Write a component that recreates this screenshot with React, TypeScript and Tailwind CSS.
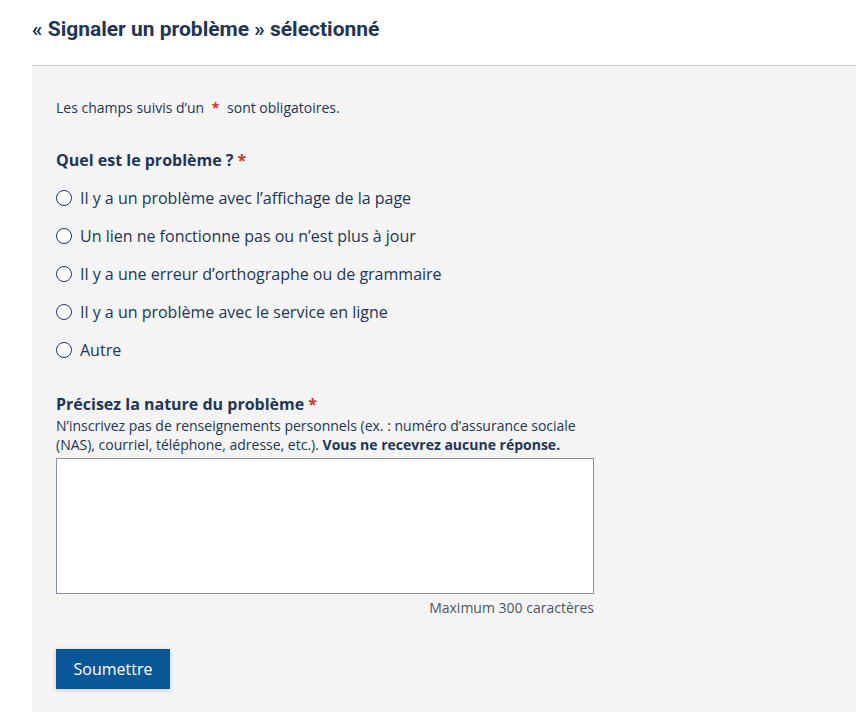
import React from "react";

const options = [
  "Il y a un problème avec l’affichage de la page",
  "Un lien ne fonctionne pas ou n’est plus à jour",
  "Il y a une erreur d’orthographe ou de grammaire",
  "Il y a un problème avec le service en ligne",
  "Autre",
];

export default function App() {
  return (
    <div className="w-[856px] h-[712px] overflow-hidden bg-white text-[#223654]" style={{ fontFamily: '"Open Sans", sans-serif' }}>
      <h2 className="pl-[32px] pt-[15px] h-[65px] text-[21px] leading-[28px] font-bold" style={{ fontFamily: "Roboto, sans-serif" }}>
        « Signaler un problème » sélectionné
      </h2>
      <div className="ml-[32px] border-t border-[#c5cad2] bg-[#f4f4f4] pl-[24px] pt-[32px] pb-[40px]">
        <p className="text-[14px] leading-[20px]">
          Les champs suivis d’un <span className="text-[#cb381f] font-bold mx-[4px]">*</span> sont obligatoires.
        </p>
        <div className="mt-[30px] text-[16px] leading-[24px] font-bold">
          Quel est le problème ? <span className="text-[#cb381f]">*</span>
        </div>
        <div className="mt-[14px] flex flex-col gap-[14px]">
          {options.map((o) => (
            <label key={o} className="flex items-center h-[24px] text-[16px] leading-[24px]">
              <span className="w-[16px] h-[16px] rounded-full border border-[#223654] bg-white mr-[8px] shrink-0" />
              {o}
            </label>
          ))}
        </div>
        <div className="mt-[30px] text-[16px] leading-[24px] font-bold">
          Précisez la nature du problème <span className="text-[#cb381f]">*</span>
        </div>
        <p className="text-[14px] leading-[19px] w-[540px]">
          N’inscrivez pas de renseignements personnels (ex. : numéro d’assurance sociale (NAS), courriel, téléphone, adresse, etc.). <span className="font-bold">Vous ne recevrez aucune réponse.</span>
        </p>
        <div className="w-[538px] mt-[4px]">
          <textarea className="block w-[538px] h-[136px] border border-[#8893a2] bg-white resize-none" />
          <div className="text-right text-[14px] leading-[20px] mt-[4px] text-[#4e5662]">Maximum 300 caractères</div>
        </div>
        <button className="mt-[31px] w-[114px] h-[40px] bg-[#095797] text-white text-[16px] shadow-[0_1px_4px_rgba(34,54,84,0.24)]">
          Soumettre
        </button>
      </div>
    </div>
  );
}
